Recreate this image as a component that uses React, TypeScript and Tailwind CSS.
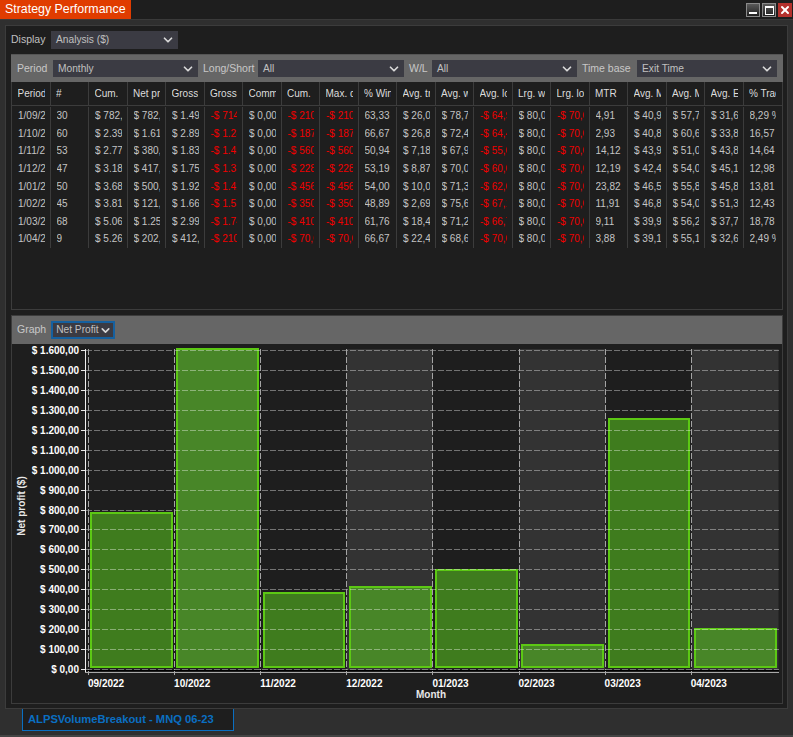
import { ChevronDown, X } from "lucide-react"

const headers = ["Period", "#", "Cum.", "Net profit", "Gross", "Gross", "Commission", "Cum.", "Max. drawdown", "% Win", "Avg. trade", "Avg. winner", "Avg. loser", "Lrg. winner", "Lrg. loser", "MTR", "Avg. MAE", "Avg. MFE", "Avg. ETD", "% Trade"]

const rows = [
  ["1/09/2022", "30", "$ 782,12", "$ 782,12", "$ 1.496,5", "-$ 714,4", "$ 0,00", "-$ 210,0", "-$ 210,0", "63,33", "$ 26,07", "$ 78,78", "-$ 64,95", "$ 80,00", "-$ 70,00", "4,91", "$ 40,95", "$ 57,70", "$ 31,65", "8,29 %"],
  ["1/10/2022", "60", "$ 2.390,1", "$ 1.610,4", "$ 2.890,7", "-$ 1.280,3", "$ 0,00", "-$ 187,5", "-$ 187,5", "66,67", "$ 26,84", "$ 72,46", "-$ 64,40", "$ 80,00", "-$ 70,00", "2,93", "$ 40,85", "$ 60,60", "$ 33,85", "16,57 %"],
  ["1/11/2022", "53", "$ 2.770,3", "$ 380,50", "$ 1.830,1", "-$ 1.450,6", "$ 0,00", "-$ 560,0", "-$ 560,0", "50,94", "$ 7,18", "$ 67,90", "-$ 55,00", "$ 80,00", "-$ 70,00", "14,12", "$ 43,95", "$ 51,05", "$ 43,85", "14,64 %"],
  ["1/12/2022", "47", "$ 3.187,4", "$ 417,10", "$ 1.750,2", "-$ 1.333,1", "$ 0,00", "-$ 228,0", "-$ 228,0", "53,19", "$ 8,87", "$ 70,05", "-$ 60,00", "$ 80,00", "-$ 70,00", "12,19", "$ 42,45", "$ 54,05", "$ 45,15", "12,98 %"],
  ["1/01/2023", "50", "$ 3.687,4", "$ 500,00", "$ 1.925,0", "-$ 1.425,0", "$ 0,00", "-$ 456,0", "-$ 456,0", "54,00", "$ 10,00", "$ 71,30", "-$ 62,00", "$ 80,00", "-$ 70,00", "23,82", "$ 46,55", "$ 55,85", "$ 45,85", "13,81 %"],
  ["1/02/2023", "45", "$ 3.810,6", "$ 121,20", "$ 1.660,4", "-$ 1.539,2", "$ 0,00", "-$ 350,0", "-$ 350,0", "48,89", "$ 2,69", "$ 75,60", "-$ 67,10", "$ 80,00", "-$ 70,00", "11,91", "$ 46,85", "$ 54,05", "$ 51,35", "12,43 %"],
  ["1/03/2023", "68", "$ 5.060,8", "$ 1.250,2", "$ 2.990,4", "-$ 1.740,2", "$ 0,00", "-$ 410,0", "-$ 410,0", "61,76", "$ 18,40", "$ 71,25", "-$ 66,70", "$ 80,00", "-$ 70,00", "9,11", "$ 39,95", "$ 56,25", "$ 37,75", "18,78 %"],
  ["1/04/2023", "9", "$ 5.263,0", "$ 202,20", "$ 412,20", "-$ 210,0", "$ 0,00", "-$ 70,00", "-$ 70,00", "66,67", "$ 22,46", "$ 68,65", "-$ 70,00", "$ 80,00", "-$ 70,00", "3,88", "$ 39,15", "$ 55,15", "$ 32,65", "2,49 %"],
]

const yLabels = ["$ 1.600,00", "$ 1.500,00", "$ 1.400,00", "$ 1.300,00", "$ 1.200,00", "$ 1.100,00", "$ 1.000,00", "$ 900,00", "$ 800,00", "$ 700,00", "$ 600,00", "$ 500,00", "$ 400,00", "$ 300,00", "$ 200,00", "$ 100,00", "$ 0,00"]

// x and top are the outer edge of the bar border
const bars = [
  { x: 90, right: 173, top: 512, month: "09/2022" },
  { x: 176, right: 259, top: 348, month: "10/2022" },
  { x: 263, right: 345, top: 592, month: "11/2022" },
  { x: 349, right: 432, top: 586, month: "12/2022" },
  { x: 435, right: 518, top: 569, month: "01/2023" },
  { x: 521, right: 604, top: 644, month: "02/2023" },
  { x: 608, right: 690, top: 418, month: "03/2023" },
  { x: 694, right: 777, top: 628, month: "04/2023" },
]

const Select = ({ label, className }: { label: string; className: string }) => (
  <div className={`flex items-center justify-between bg-[#3b3b43] pl-[5px] pr-[3px] text-[10.2px] text-[#c0c0c0] ${className}`}>
    <span className="whitespace-nowrap">{label}</span>
    <ChevronDown className="w-[14px] h-[14px] text-[#d8d8d8]" strokeWidth={3} />
  </div>
)

const Chart = () => {
  const gridX = bars.map((_, i) => 88 + i * 86.1)
  return (
    <svg viewBox="12 344 770 359" width="770" height="359" className="block font-bold">
      {/* alternating period bands */}
      {[346.5, 519, 691.5].map((x) => (
        <rect key={x} x={x} y={349} width={x === 691.5 ? 87 : 86.5} height={321} fill="#333333" />
      ))}
      {bars.map((b, i) => (
        <rect
          key={b.month}
          x={b.x + 1}
          y={b.top + 1}
          width={b.right - b.x - 2}
          height={667 - b.top - 1}
          fill={i % 2 === 0 ? "#3f7c1e" : "#488628"}
          stroke="#5cc814"
          strokeWidth={2}
        />
      ))}
      {yLabels.map((label, i) => {
        const y = Math.round(350 + i * 19.94) + 0.5
        return (
          <g key={label}>
            <line x1={86} x2={779} y1={y} y2={y} stroke="#ffffff" strokeOpacity={0.38} strokeDasharray="6 2" />
            <line x1={81} x2={86} y1={y} y2={y} stroke="#e8e8e8" />
            <text x={79} y={y + 3.5} textAnchor="end" fontSize={10} fill="#ffffff">
              {label}
            </text>
          </g>
        )
      })}
      {gridX.map((x) => (
        <line key={x} x1={Math.round(x) + 0.5} x2={Math.round(x) + 0.5} y1={349} y2={676} stroke="#a4a4a4" strokeDasharray="6 2" />
      ))}
      <line x1={85.5} x2={85.5} y1={349} y2={673} stroke="#f0f0f0" />
      <line x1={86} x2={779} y1={670.5} y2={670.5} stroke="#000000" />
      <line x1={85} x2={779} y1={672.5} y2={672.5} stroke="#a8a8a8" />
      {bars.map((b, i) => (
        <text key={b.month} x={88 + i * 86.1} y={687} fontSize={10} fill="#ffffff">
          {b.month}
        </text>
      ))}
      <text x={431} y={698} textAnchor="middle" fontSize={10} fill="#e8e8e8">
        Month
      </text>
      <text x={25} y={506} textAnchor="middle" fontSize={10} fill="#e8e8e8" transform="rotate(-90 25 506)">
        Net profit ($)
      </text>
    </svg>
  )
}

export default function App() {
  return (
    <div className="w-[793px] h-[737px] flex flex-col overflow-hidden bg-[#2f2f2f] border-b-2 border-[#444444] font-['Liberation_Sans',Arial,sans-serif]">
      {/* Title bar */}
      <div className="h-[20px] shrink-0 flex justify-between bg-[#1e1e1e] border-b border-[#3a3a3a]">
        <div className="w-[131px] shrink-0 bg-[#e03c00] pl-[5px] text-[12.4px] leading-[19px] whitespace-nowrap text-white">Strategy Performance</div>
        <div className="flex gap-[2px] pt-[3px] pr-[1px]">
          <div className="w-[14px] h-[14px] flex items-end justify-center pb-[2px] border border-[#8a8a8a] bg-gradient-to-b from-[#5a5a5a] to-[#222222]">
            <div className="w-[8px] h-[2px] bg-white" />
          </div>
          <div className="w-[14px] h-[14px] flex items-center justify-center border border-[#8a8a8a] bg-gradient-to-b from-[#5a5a5a] to-[#222222]">
            <div className="w-[9px] h-[9px] border border-t-2 border-white" />
          </div>
          <div className="w-[14px] h-[14px] flex items-center justify-center bg-[#b4312d]">
            <X className="w-[12px] h-[12px] text-white" strokeWidth={4} />
          </div>
        </div>
      </div>

      {/* Main panel */}
      <div className="mx-[5px] mt-[5px] h-[684px] shrink-0 flex flex-col bg-[#1e1e1e] border border-[#3c3c3c] pl-[5px] pr-[4px] pt-[5px]">
        <div className="h-[18px] shrink-0 flex items-center text-[10.5px] text-[#c0c0c0]">
          <span className="w-[40px] shrink-0">Display</span>
          <Select label="Analysis ($)" className="w-[127px] h-[18px]" />
        </div>

        {/* Filters */}
        <div className="mt-[5px] h-[28px] shrink-0 flex items-center bg-[#666666] border-t border-[#555555] pl-[6px] text-[10.5px] text-[#c8c8c8]">
          <span className="w-[36px] whitespace-nowrap">Period</span>
          <Select label="Monthly" className="w-[145px] h-[17px]" />
          <span className="w-[60px] pl-[5px] whitespace-nowrap">Long/Short</span>
          <Select label="All" className="w-[146px] h-[17px]" />
          <span className="w-[28px] pl-[5px] whitespace-nowrap">W/L</span>
          <Select label="All" className="w-[145px] h-[17px]" />
          <span className="w-[60px] pl-[5px] whitespace-nowrap">Time base</span>
          <Select label="Exit Time" className="w-[140px] h-[17px]" />
        </div>

        {/* Table */}
        <div className="h-[228px] shrink-0 border-x border-b border-[#3c3c3c] text-[10px]">
          <div className="grid grid-cols-[repeat(20,minmax(0,1fr))] h-[24px] border-b border-[#3c3c3c] text-[#dcdcdc]">
            {headers.map((h, i) => (
              <div key={i} className="flex items-center pl-[5.5px] pr-[5px] border-r border-[#3c3c3c] last:border-r-0 last:pr-[6px]">
                <div className="overflow-hidden whitespace-nowrap">{h}</div>
              </div>
            ))}
          </div>
          <div className="pt-[1px]">
            {rows.map((row) => (
              <div key={row[0]} className="grid grid-cols-[repeat(20,minmax(0,1fr))] h-[17.6px]">
                {row.map((cell, i) => (
                  <div key={i} className="flex items-center pl-[6px] pr-[5px] border-r border-[#3c3c3c] last:border-r-0 last:pr-[6px]">
                    <div className={`overflow-hidden whitespace-nowrap ${cell.startsWith("-$") ? "text-[#f00000]" : "text-[#c4c4c4]"}`}>{cell}</div>
                  </div>
                ))}
              </div>
            ))}
          </div>
        </div>

        {/* Graph */}
        <div className="mt-[5px] flex-1 min-h-0 mb-[4px] border border-[#3c3c3c]">
          <div className="h-[28px] flex items-center gap-[5px] bg-[#666666] pl-[5px] text-[10.5px] text-[#c8c8c8]">
            <span>Graph</span>
            <div className="w-[64px] h-[18px] flex items-center justify-between bg-[#3b3b43] border-2 border-[#15609f] pl-[3px] pr-[1px] text-[10.2px] text-[#c0c0c0]">
              <span className="whitespace-nowrap">Net Profit</span>
              <ChevronDown className="w-[13px] h-[13px] shrink-0 text-[#d8d8d8]" strokeWidth={3} />
            </div>
          </div>
          <Chart />
        </div>
      </div>

      {/* Tab under the panel */}
      <div className="ml-[22px] w-[212px] h-[22px] shrink-0 flex items-center bg-[#1e1e1e] border-x border-b border-[#0a6fc2] pl-[5px] text-[11.2px] font-bold text-[#0a6fc2]">
        ALPSVolumeBreakout - MNQ 06-23
      </div>
    </div>
  )
}
